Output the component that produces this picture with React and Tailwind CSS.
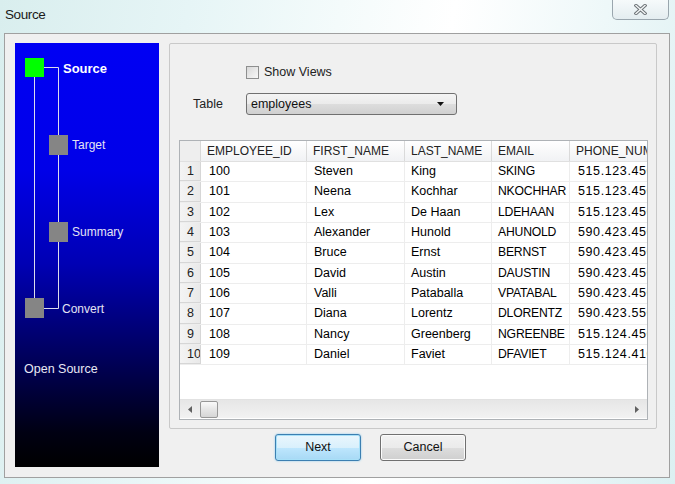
import React from "react";

const cols = [
  { key: "id", label: "EMPLOYEE_ID", w: "w-[106px]" },
  { key: "first", label: "FIRST_NAME", w: "w-[98px]" },
  { key: "last", label: "LAST_NAME", w: "w-[87px]" },
  { key: "email", label: "EMAIL", w: "w-[78px]" },
  { key: "phone", label: "PHONE_NUMBER", w: "w-[110px]" },
];

const rows = [
  ["100", "Steven", "King", "SKING", "515.123.4567"],
  ["101", "Neena", "Kochhar", "NKOCHHAR", "515.123.4568"],
  ["102", "Lex", "De Haan", "LDEHAAN", "515.123.4569"],
  ["103", "Alexander", "Hunold", "AHUNOLD", "590.423.4567"],
  ["104", "Bruce", "Ernst", "BERNST", "590.423.4568"],
  ["105", "David", "Austin", "DAUSTIN", "590.423.4569"],
  ["106", "Valli", "Pataballa", "VPATABAL", "590.423.4560"],
  ["107", "Diana", "Lorentz", "DLORENTZ", "590.423.5567"],
  ["108", "Nancy", "Greenberg", "NGREENBE", "515.124.4569"],
  ["109", "Daniel", "Faviet", "DFAVIET", "515.124.4169"],
];

function StepTree() {
  return (
    <div className="relative w-[144px] h-[424px] shrink-0 bg-[linear-gradient(to_bottom,#0000f4_0%,#0000e8_30%,#0000b4_52%,#000058_75%,#000012_92%,#000000_100%)] text-white">
      <svg className="absolute left-0 top-0" width="144" height="290" viewBox="0 0 144 290">
        <g stroke="#dcdcec" strokeWidth="1" fill="none">
          <path d="M19.5 34 V255" />
          <path d="M28 24.5 H43.5 V265.5 H28" />
        </g>
        <rect x="10" y="15" width="19" height="19" fill="#00ff00" />
        <rect x="34" y="92" width="19" height="20" fill="#858585" />
        <rect x="34" y="179" width="19" height="20" fill="#858585" />
        <rect x="10" y="255" width="19" height="20" fill="#858585" />
      </svg>
      <span className="absolute left-[48px] top-[18px] text-[13px] font-bold leading-[16px]">Source</span>
      <span className="absolute left-[57px] top-[95px] text-[12px] leading-[14px] text-[#e4e4f4]">Target</span>
      <span className="absolute left-[57px] top-[182px] text-[12px] leading-[14px] text-[#e4e4f4]">Summary</span>
      <span className="absolute left-[47px] top-[259px] text-[12px] leading-[14px] text-[#e4e4f4]">Convert</span>
      <span className="absolute left-[9px] top-[319px] text-[12.5px] leading-[14px] text-[#e8e8f4]">Open Source</span>
    </div>
  );
}

function DataGrid() {
  return (
    <div className="ml-[9px] mt-[25px] w-[469px] h-[280px] border border-[#aeb2b6] bg-white flex flex-col overflow-hidden">
      <div className="flex h-[21px] shrink-0 bg-[linear-gradient(to_bottom,#ffffff,#f1f2f4)] border-b border-[#e0e0e0]">
        <div className="w-[21px] shrink-0 border-r border-[#d8d8d8] bg-[#eeeeee]" />
        {cols.map((c) => (
          <div
            key={c.key}
            className={`${c.w} shrink-0 border-r border-[#dadada] pl-[6px] text-[12px] leading-[21px] whitespace-nowrap overflow-hidden text-[#222]`}
          >
            {c.label}
          </div>
        ))}
      </div>
      {rows.map((r, i) => (
        <div key={i} className="flex h-[20.33px] shrink-0 border-b border-[#ededed]">
          <div className="w-[21px] shrink-0 border-r border-b border-[#d6d6d6] bg-[linear-gradient(to_right,#f4f4f4,#e9e9e9)] pl-[7px] text-[12.5px] leading-[19px] whitespace-nowrap overflow-hidden text-[#222]">
            {i + 1}
          </div>
          <div className="w-[106px] shrink-0 border-r border-[#ededed] pl-[8px] text-[12.5px] leading-[19px] whitespace-nowrap overflow-hidden">{r[0]}</div>
          <div className="w-[98px] shrink-0 border-r border-[#ededed] pl-[7px] text-[12.5px] leading-[19px] whitespace-nowrap overflow-hidden">{r[1]}</div>
          <div className="w-[87px] shrink-0 border-r border-[#ededed] pl-[6px] text-[12.5px] leading-[19px] whitespace-nowrap overflow-hidden">{r[2]}</div>
          <div className="w-[78px] shrink-0 border-r border-[#ededed] pl-[6px] text-[12.2px] tracking-[-0.2px] leading-[19px] whitespace-nowrap overflow-hidden">{r[3]}</div>
          <div className="w-[110px] shrink-0 pl-[8px] text-[12.5px] tracking-[0.6px] leading-[19px] whitespace-nowrap overflow-hidden">{r[4]}</div>
        </div>
      ))}
      <div className="flex-1" />
      <div className="h-[19px] mb-[1px] shrink-0 flex items-center bg-[linear-gradient(to_bottom,#e6e6e6,#f2f2f2)] border-t border-[#e2e2e2]">
        <div className="w-[20px] flex items-center justify-center">
          <svg width="4" height="7" viewBox="0 0 4 7"><path d="M4 0 L0 3.5 L4 7 Z" fill="#606060" /></svg>
        </div>
        <div className="w-[18px] h-[17px] rounded-[2px] border border-[#989898] bg-[linear-gradient(to_bottom,#fafafa,#e6e6e6_50%,#d6d6d6)]" />
        <div className="flex-1" />
        <div className="w-[20px] flex items-center justify-center">
          <svg width="4" height="7" viewBox="0 0 4 7"><path d="M0 0 L4 3.5 L0 7 Z" fill="#606060" /></svg>
        </div>
      </div>
    </div>
  );
}

export default function App() {
  return (
    <div className="w-[675px] h-[484px] overflow-hidden bg-[linear-gradient(100deg,#d9eeee_0%,#e6f5f6_25%,#f4fbfb_45%,#ffffff_60%,#eef8f9_80%,#dcf0f2_100%)] font-['Liberation_Sans',Arial,sans-serif] text-black">
      <div className="h-[33px] flex items-start justify-between">
        <span className="pl-[5px] pt-[7px] text-[13.5px] tracking-[-0.4px] leading-[16px] text-[#1a1a1a]">Source</span>
        <div className="mr-[6px] w-[57px] h-[20px] rounded-b-[5px] border border-t-0 border-[#9aa6ae] bg-[linear-gradient(to_bottom,#f6fafb,#e4edf0)] flex items-center justify-center">
          <svg width="13" height="11" viewBox="0 0 13 11">
            <path d="M2 1.5 L11 9.5 M11 1.5 L2 9.5" stroke="#6e7478" strokeWidth="3.4" strokeLinecap="square" />
            <path d="M2 1.5 L11 9.5 M11 1.5 L2 9.5" stroke="#f4f6f7" strokeWidth="1.4" strokeLinecap="square" />
          </svg>
        </div>
      </div>
      <div className="ml-[4px] w-[666px] h-[445px] border border-[#a0a0a0] bg-[#f0f0f0] flex gap-[10px] pl-[10px] pt-[9px]">
        <StepTree />
        <div className="flex flex-col w-[488px]">
          <div className="h-[386px] border border-[#c9c9c9] rounded-[2px] flex flex-col">
            <div className="mt-[21px] ml-[76px] flex items-center h-[14px]">
              <div className="w-[13px] h-[13px] border border-[#8e8f8f] bg-[linear-gradient(135deg,#d8d8d8,#f8f8f8)]" />
              <span className="ml-[5px] text-[12.5px] leading-[14px] text-[#222]">Show Views</span>
            </div>
            <div className="mt-[14px] flex items-center h-[22px]">
              <span className="ml-[23px] w-[53px] text-[12.5px] text-[#222]">Table</span>
              <div className="w-[211px] h-[22px] rounded-[3px] border border-[#707070] bg-[linear-gradient(to_bottom,#f4f4f4,#ebebeb_50%,#dddddd_51%,#d0d0d0)] flex items-center justify-between pl-[4px] pr-[12px]">
                <span className="text-[12.5px] text-[#111]">employees</span>
                <svg width="7" height="4" viewBox="0 0 7 4"><path d="M0 0 H7 L3.5 4 Z" fill="#111" /></svg>
              </div>
            </div>
            <DataGrid />
          </div>
          <div className="mt-[5px] ml-[106px] flex gap-[19px]">
            <button className="w-[86px] h-[27px] rounded-[3px] border border-[#3c7fb1] shadow-[inset_0_0_0_1px_#a8e0f8,0_0_2px_#7cc4ee] bg-[linear-gradient(to_bottom,#eaf6fd,#d9f0fc_50%,#bee6fd_51%,#a7d9f5)] text-[12.5px] text-[#111]">
              Next
            </button>
            <button className="w-[86px] h-[27px] rounded-[3px] border border-[#707070] shadow-[inset_0_0_0_1px_#fbfbfb] bg-[linear-gradient(to_bottom,#f2f2f2,#ebebeb_50%,#dddddd_51%,#cfcfcf)] text-[12.5px] text-[#111]">
              Cancel
            </button>
          </div>
        </div>
      </div>
    </div>
  );
}
